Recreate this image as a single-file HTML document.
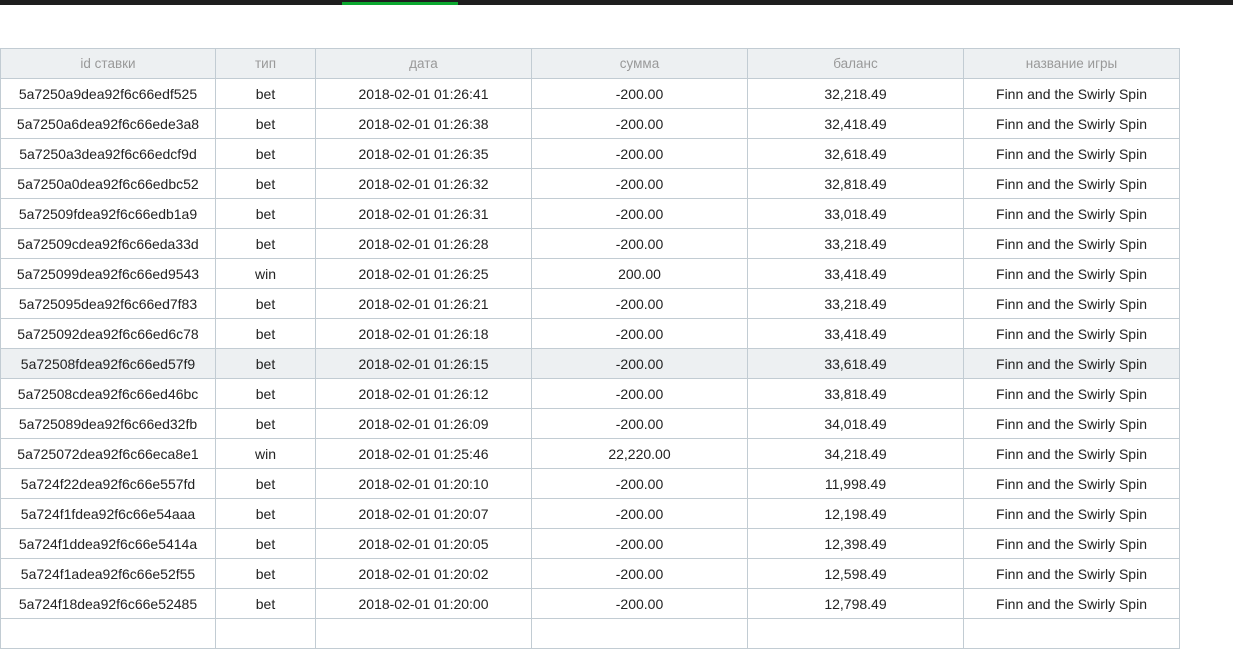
<!DOCTYPE html><html><head><meta charset="utf-8"><style>
body{margin:0;width:1233px;height:631px;overflow:hidden;background:#fff;font-family:"Liberation Sans",sans-serif;position:relative}
.bar{position:absolute;left:0;top:0;width:1233px;height:5px;background:#1e1e1e}
.g{position:absolute;left:342px;top:2px;width:116px;height:3px;background:#0ca830}
table{position:absolute;left:0;top:48px;border-collapse:collapse;table-layout:fixed;width:1180px}
td,th{border:1px solid #c2ccd3;height:29px;padding:0;text-align:center;font-size:14px;color:#222;font-weight:normal}
th{background:#edf0f2;color:#999;font-size:13.5px}
tr.h td{background:#edf0f2}
</style></head><body><div class="bar"><div class="g"></div></div>
<table><colgroup><col style="width:215px"><col style="width:100px"><col style="width:216px"><col style="width:216px"><col style="width:216px"><col style="width:216px"></colgroup>
<tr><th>id ставки</th><th>тип</th><th>дата</th><th>сумма</th><th>баланс</th><th>название игры</th></tr>
<tr><td>5a7250a9dea92f6c66edf525</td><td>bet</td><td>2018-02-01 01:26:41</td><td>-200.00</td><td>32,218.49</td><td>Finn and the Swirly Spin</td></tr>
<tr><td>5a7250a6dea92f6c66ede3a8</td><td>bet</td><td>2018-02-01 01:26:38</td><td>-200.00</td><td>32,418.49</td><td>Finn and the Swirly Spin</td></tr>
<tr><td>5a7250a3dea92f6c66edcf9d</td><td>bet</td><td>2018-02-01 01:26:35</td><td>-200.00</td><td>32,618.49</td><td>Finn and the Swirly Spin</td></tr>
<tr><td>5a7250a0dea92f6c66edbc52</td><td>bet</td><td>2018-02-01 01:26:32</td><td>-200.00</td><td>32,818.49</td><td>Finn and the Swirly Spin</td></tr>
<tr><td>5a72509fdea92f6c66edb1a9</td><td>bet</td><td>2018-02-01 01:26:31</td><td>-200.00</td><td>33,018.49</td><td>Finn and the Swirly Spin</td></tr>
<tr><td>5a72509cdea92f6c66eda33d</td><td>bet</td><td>2018-02-01 01:26:28</td><td>-200.00</td><td>33,218.49</td><td>Finn and the Swirly Spin</td></tr>
<tr><td>5a725099dea92f6c66ed9543</td><td>win</td><td>2018-02-01 01:26:25</td><td>200.00</td><td>33,418.49</td><td>Finn and the Swirly Spin</td></tr>
<tr><td>5a725095dea92f6c66ed7f83</td><td>bet</td><td>2018-02-01 01:26:21</td><td>-200.00</td><td>33,218.49</td><td>Finn and the Swirly Spin</td></tr>
<tr><td>5a725092dea92f6c66ed6c78</td><td>bet</td><td>2018-02-01 01:26:18</td><td>-200.00</td><td>33,418.49</td><td>Finn and the Swirly Spin</td></tr>
<tr class="h"><td>5a72508fdea92f6c66ed57f9</td><td>bet</td><td>2018-02-01 01:26:15</td><td>-200.00</td><td>33,618.49</td><td>Finn and the Swirly Spin</td></tr>
<tr><td>5a72508cdea92f6c66ed46bc</td><td>bet</td><td>2018-02-01 01:26:12</td><td>-200.00</td><td>33,818.49</td><td>Finn and the Swirly Spin</td></tr>
<tr><td>5a725089dea92f6c66ed32fb</td><td>bet</td><td>2018-02-01 01:26:09</td><td>-200.00</td><td>34,018.49</td><td>Finn and the Swirly Spin</td></tr>
<tr><td>5a725072dea92f6c66eca8e1</td><td>win</td><td>2018-02-01 01:25:46</td><td>22,220.00</td><td>34,218.49</td><td>Finn and the Swirly Spin</td></tr>
<tr><td>5a724f22dea92f6c66e557fd</td><td>bet</td><td>2018-02-01 01:20:10</td><td>-200.00</td><td>11,998.49</td><td>Finn and the Swirly Spin</td></tr>
<tr><td>5a724f1fdea92f6c66e54aaa</td><td>bet</td><td>2018-02-01 01:20:07</td><td>-200.00</td><td>12,198.49</td><td>Finn and the Swirly Spin</td></tr>
<tr><td>5a724f1ddea92f6c66e5414a</td><td>bet</td><td>2018-02-01 01:20:05</td><td>-200.00</td><td>12,398.49</td><td>Finn and the Swirly Spin</td></tr>
<tr><td>5a724f1adea92f6c66e52f55</td><td>bet</td><td>2018-02-01 01:20:02</td><td>-200.00</td><td>12,598.49</td><td>Finn and the Swirly Spin</td></tr>
<tr><td>5a724f18dea92f6c66e52485</td><td>bet</td><td>2018-02-01 01:20:00</td><td>-200.00</td><td>12,798.49</td><td>Finn and the Swirly Spin</td></tr>
<tr><td>&nbsp;</td><td></td><td></td><td></td><td></td><td></td></tr>
</table></body></html>
